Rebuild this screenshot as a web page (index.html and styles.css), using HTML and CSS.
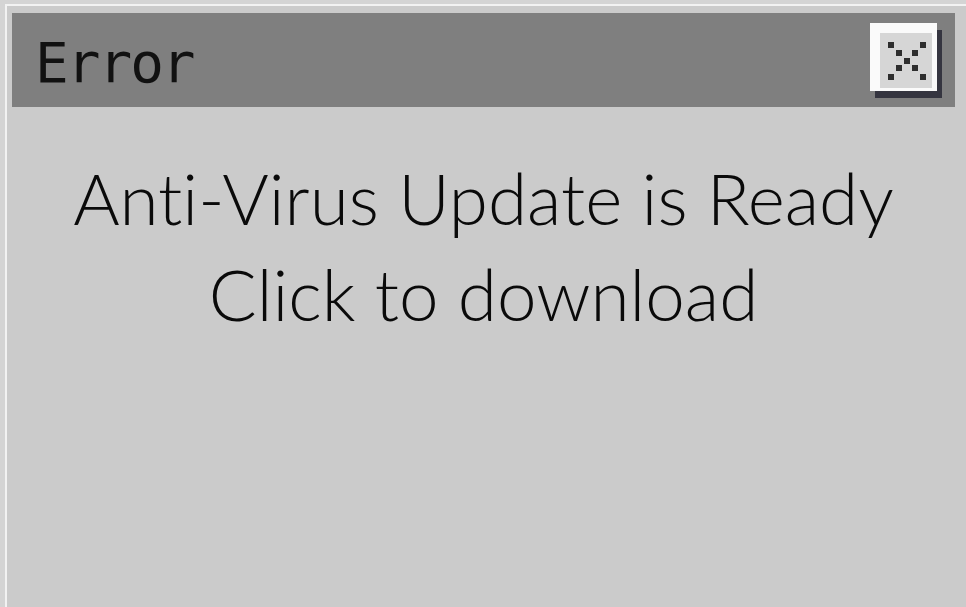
FILE: index.html
```html
<!DOCTYPE html>
<html lang="en">
<head>
<meta charset="utf-8">
<title>Error</title>
<link rel="stylesheet" href="styles.css">
</head>
<body>
<div class="window">
  <div class="titlebar">
    <span class="title">Error</span>
    <button class="close" aria-label="Close">
      <svg width="52" height="55" viewBox="0 0 52 55">
        <g fill="#2e2e2e">
          <rect x="8" y="9" width="6" height="6"/>
          <rect x="40" y="9" width="6" height="6"/>
          <rect x="16" y="17" width="6" height="6"/>
          <rect x="32" y="17" width="6" height="6"/>
          <rect x="24" y="25" width="6" height="6"/>
          <rect x="16" y="32" width="6" height="6"/>
          <rect x="32" y="32" width="6" height="6"/>
          <rect x="8" y="41" width="6" height="6"/>
          <rect x="40" y="41" width="6" height="6"/>
        </g>
      </svg>
    </button>
  </div>
  <div class="message">
    <p>Anti-Virus Update is Ready</p>
    <p>Click to download</p>
  </div>
</div>
</body>
</html>
```
FILE: styles.css
```css
html, body {
  margin: 0;
  padding: 0;
  height: 100%;
  overflow: hidden;
}
body {
  background: #d4d4d4;
  padding: 4px 0 0 5px;
  box-sizing: border-box;
}
.window {
  height: 100%;
  background: #cbcbcb;
  border-top: 2px solid #f2f2f2;
  border-left: 2px solid #f2f2f2;
  padding: 7px 11px 0 5px;
  box-sizing: border-box;
}
.titlebar {
  height: 94px;
  background: #7f7f7f;
  display: flex;
  align-items: flex-start;
  justify-content: space-between;
  padding: 0 18px 0 23px;
}
.title {
  font-family: "DejaVu Sans Mono", monospace;
  font-size: 56px;
  letter-spacing: -2px;
  line-height: 1;
  color: #111;
  margin-top: 22px;
}
.close {
  width: 67px;
  height: 68px;
  padding: 0;
  margin-top: 10px;
  background: #d6d6d6;
  border: 0;
  border-top: 10px solid #fafafa;
  border-left: 10px solid #fafafa;
  border-right: 5px solid #fafafa;
  border-bottom: 3px solid #fafafa;
  box-shadow: 5px 7px 0 #353540;
  display: flex;
  align-items: flex-start;
  justify-content: flex-start;
  box-sizing: border-box;
}
.close svg {
  display: block;
}
.message {
  padding-top: 43px;
  text-align: center;
  font-family: Lato, sans-serif;
  font-weight: 300;
  font-variant-ligatures: none;
  font-size: 71px;
  line-height: 96px;
  color: #0a0a0a;
}
.message p {
  margin: 0;
}
```
